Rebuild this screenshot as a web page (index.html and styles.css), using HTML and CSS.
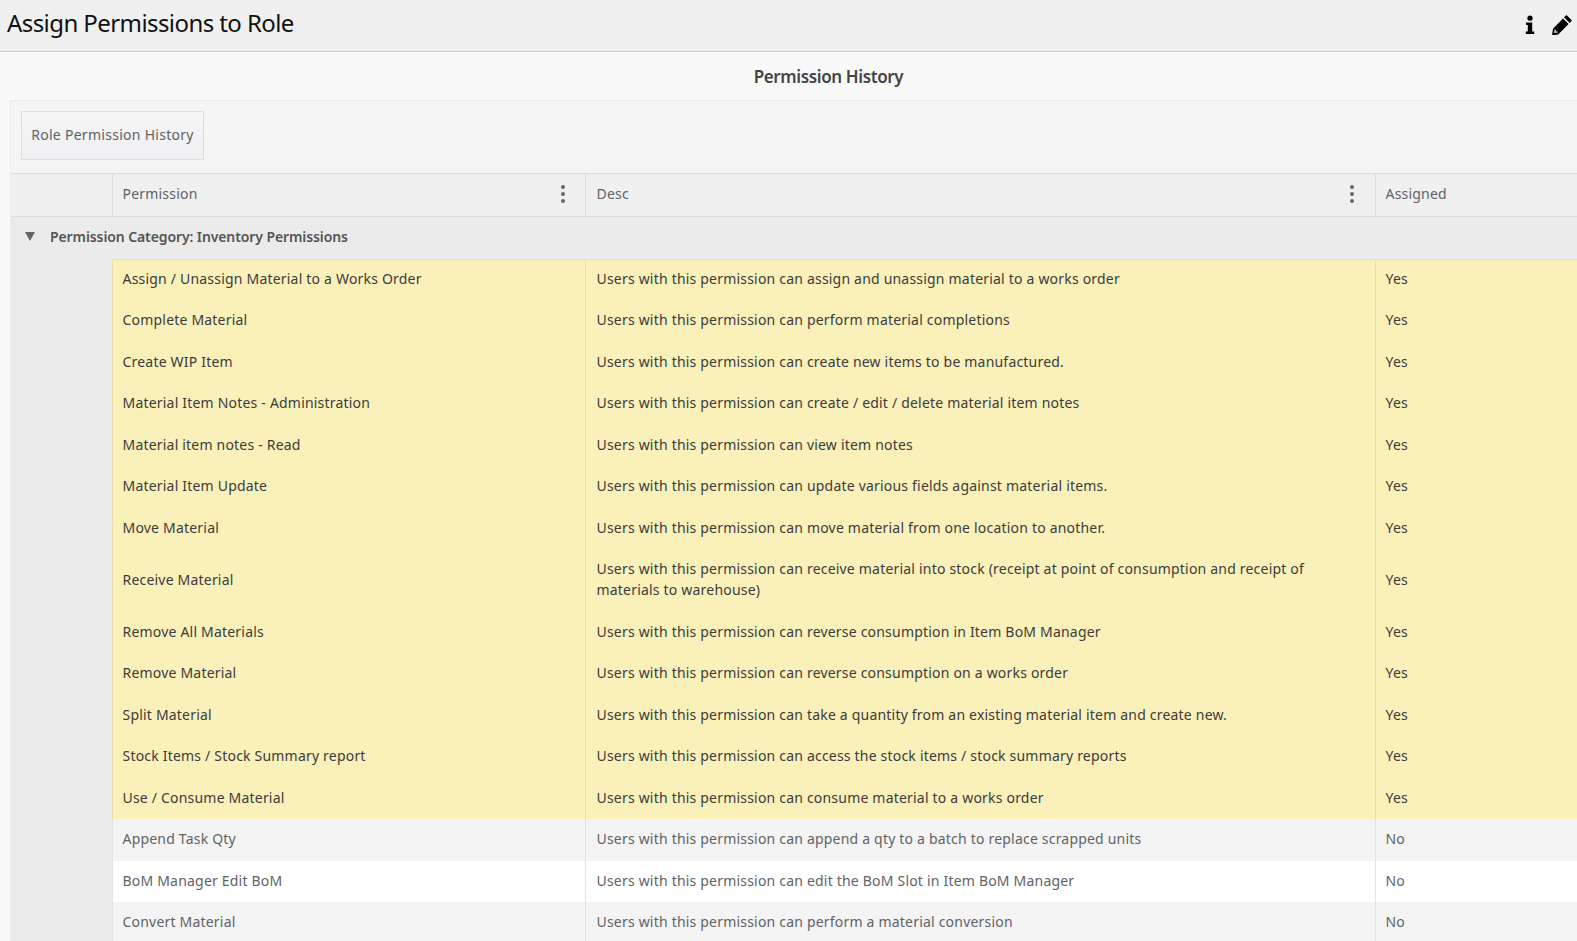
FILE: index.html
```html
<!DOCTYPE html>
<html lang="en">
<head>
  <meta charset="UTF-8" />
  <title>Assign Permissions to Role</title>
  <link rel="stylesheet" href="styles.css">
</head>
<body>
  <header class="title-bar">
    <h1>Assign Permissions to Role</h1>
    <div class="title-icons">
      <svg class="icon-info" viewBox="0 0 10 20" width="10" height="20"><circle cx="5" cy="3.2" r="2.6"/><path d="M1 7.5h6.2v9H9.2v2.6H.8v-2.6h2v-6.4H1z"/></svg>
      <svg class="icon-pencil" viewBox="0 0 20 20" width="20" height="20"><path d="M15.2.7l4.1 4.1c.5.5.5 1 0 1.5l-1.6 1.6-5.6-5.6L13.7.7c.5-.5 1-.5 1.500 0zM11 3.400l5.600 5.600L6.200 19.400 0 20.500l1-6.700zM2.700 14.600l-.6 3.400 3.400-.6.2-1h-2v-1.900z"/></svg>
    </div>
  </header>
  <h2 class="section-title">Permission History</h2>
  <section class="grid-panel">
    <div class="grid-toolbar"><button class="tool-btn">Role Permission History</button></div>
    <table class="perm-table">
      <colgroup><col class="col-group"><col class="col-perm"><col class="col-desc"><col class="col-assigned"></colgroup>
      <thead>
        <tr>
          <th></th>
          <th><div class="th-inner">Permission <span class="kebab"><i></i><i></i><i></i></span></div></th>
          <th class="desc"><div class="th-inner">Desc <span class="kebab"><i></i><i></i><i></i></span></div></th>
          <th>Assigned</th>
        </tr>
      </thead>
      <tbody>
        <tr class="group-row"><td colspan="4"><span class="caret"></span>Permission Category: Inventory Permissions</td></tr>
        <tr class="on"><td class="indent" rowspan="16"></td><td>Assign / Unassign Material to a Works Order</td><td class="desc">Users with this permission can assign and unassign material to a works order</td><td>Yes</td></tr>
        <tr class="on"><td>Complete Material</td><td class="desc">Users with this permission can perform material completions</td><td>Yes</td></tr>
        <tr class="on"><td>Create WIP Item</td><td class="desc">Users with this permission can create new items to be manufactured.</td><td>Yes</td></tr>
        <tr class="on"><td>Material Item Notes - Administration</td><td class="desc">Users with this permission can create / edit / delete material item notes</td><td>Yes</td></tr>
        <tr class="on"><td>Material item notes - Read</td><td class="desc">Users with this permission can view item notes</td><td>Yes</td></tr>
        <tr class="on"><td>Material Item Update</td><td class="desc">Users with this permission can update various fields against material items.</td><td>Yes</td></tr>
        <tr class="on"><td>Move Material</td><td class="desc">Users with this permission can move material from one location to another.</td><td>Yes</td></tr>
        <tr class="on"><td>Receive Material</td><td class="desc">Users with this permission can receive material into stock (receipt at point of consumption and receipt of materials to warehouse)</td><td>Yes</td></tr>
        <tr class="on"><td>Remove All Materials</td><td class="desc">Users with this permission can reverse consumption in Item BoM Manager</td><td>Yes</td></tr>
        <tr class="on"><td>Remove Material</td><td class="desc">Users with this permission can reverse consumption on a works order</td><td>Yes</td></tr>
        <tr class="on"><td>Split Material</td><td class="desc">Users with this permission can take a quantity from an existing material item and create new.</td><td>Yes</td></tr>
        <tr class="on"><td>Stock Items / Stock Summary report</td><td class="desc">Users with this permission can access the stock items / stock summary reports</td><td>Yes</td></tr>
        <tr class="on"><td>Use / Consume Material</td><td class="desc">Users with this permission can consume material to a works order</td><td>Yes</td></tr>
        <tr class="alt"><td>Append Task Qty</td><td class="desc">Users with this permission can append a qty to a batch to replace scrapped units</td><td>No</td></tr>
        <tr><td>BoM Manager Edit BoM</td><td class="desc">Users with this permission can edit the BoM Slot in Item BoM Manager</td><td>No</td></tr>
        <tr class="alt"><td>Convert Material</td><td class="desc">Users with this permission can perform a material conversion</td><td>No</td></tr>
      </tbody>
    </table>
  </section>
</body>
</html>
```
FILE: styles.css
```css
html, body {
  height: 100%;
}
body {
  margin: 0;
  overflow: hidden;
  font-family: "Noto Sans", sans-serif;
  font-size: 14px;
  line-height: 21px;
  letter-spacing: 0.2px;
  color: #5f6368;
  background: #f9f9f9;
}
.title-bar {
  display: flex;
  justify-content: space-between;
  align-items: center;
  height: 52px;
  padding: 0 5px 6px 7px;
  box-sizing: border-box;
  background: #f0f0f0;
  border-bottom: 1px solid #ccc;
}
.title-bar h1 {
  margin: 0;
  font-size: 24px;
  font-weight: 400;
  letter-spacing: -0.58px;
  color: #111;
}
.title-icons {
  display: flex;
  align-items: center;
  gap: 17px;
  margin-top: 4px;
}
.title-icons svg {
  display: block;
  fill: #000;
}
.section-title {
  margin: 0;
  height: 48px;
  padding-left: 80px;
  line-height: 50px;
  text-align: center;
  font-size: 17px;
  font-weight: 600;
  letter-spacing: -0.38px;
  color: #444;
}
.grid-panel {
  margin-left: 10px;
  background: #f5f5f5;
  border-top: 1px solid #ebebeb;
  border-left: 1px solid #ebebeb;
}
.grid-toolbar {
  padding: 10px 10px 13px;
}
.tool-btn {
  display: block;
  width: 183px;
  height: 49px;
  padding: 0 0 2px;
  font: inherit;
  letter-spacing: 0.28px;
  color: #5f6368;
  background: linear-gradient(#f5f5f5, #eff0f2);
  border: 1px solid #ddd;
}
.perm-table {
  table-layout: fixed;
  width: 1660px;
  border-collapse: collapse;
}
.col-group { width: 101px; }
.col-perm { width: 473px; }
.col-desc { width: 790px; }
.perm-table th {
  height: 43px;
  padding: 0 10px 3px;
  box-sizing: border-box;
  text-align: left;
  font-weight: 400;
  background: #f0f0f0;
  border-top: 1px solid #ddd;
  border-bottom: 1px solid #ddd;
  border-left: 1px solid #ddd;
}
.perm-table th:first-child { border-left: 0; }
.perm-table th.desc { padding: 0 11px 3px; }
.th-inner {
  display: flex;
  justify-content: space-between;
  align-items: center;
}
.kebab {
  display: flex;
  flex-direction: column;
  gap: 3px;
  margin-right: 10px;
}
.kebab i {
  width: 4px;
  height: 4px;
  border-radius: 50%;
  background: #666;
}
.perm-table td {
  padding: 9px 10px 11.5px;
  border-left: 1px solid #e2e2e2;
  background: #fff;
}
.perm-table td.desc { padding-left: 11px; }
.perm-table tr.alt td { background: #f4f4f4; }
.perm-table tr.on td {
  background: #faf0b9;
  color: #3c3c3c;
  border-left-color: #eadfa6;
}
.group-row + tr td:not(.indent) {
  box-shadow: inset 0 1px #eadfa6;
}
.perm-table tr.group-row td {
  padding: 9px 10px 11.5px 14px;
  background: #ebebeb;
  border-left: 0;
  font-weight: 600;
  letter-spacing: -0.1px;
  color: #555;
}
.perm-table td.indent,
.perm-table tr.on td.indent {
  background: #ebebeb;
  border-left: 0;
}
.caret {
  display: inline-block;
  width: 0;
  height: 0;
  margin-right: 15px;
  vertical-align: 1px;
  border-left: 5.500px solid transparent;
  border-right: 5.500px solid transparent;
  border-top: 9px solid #666;
}
```
